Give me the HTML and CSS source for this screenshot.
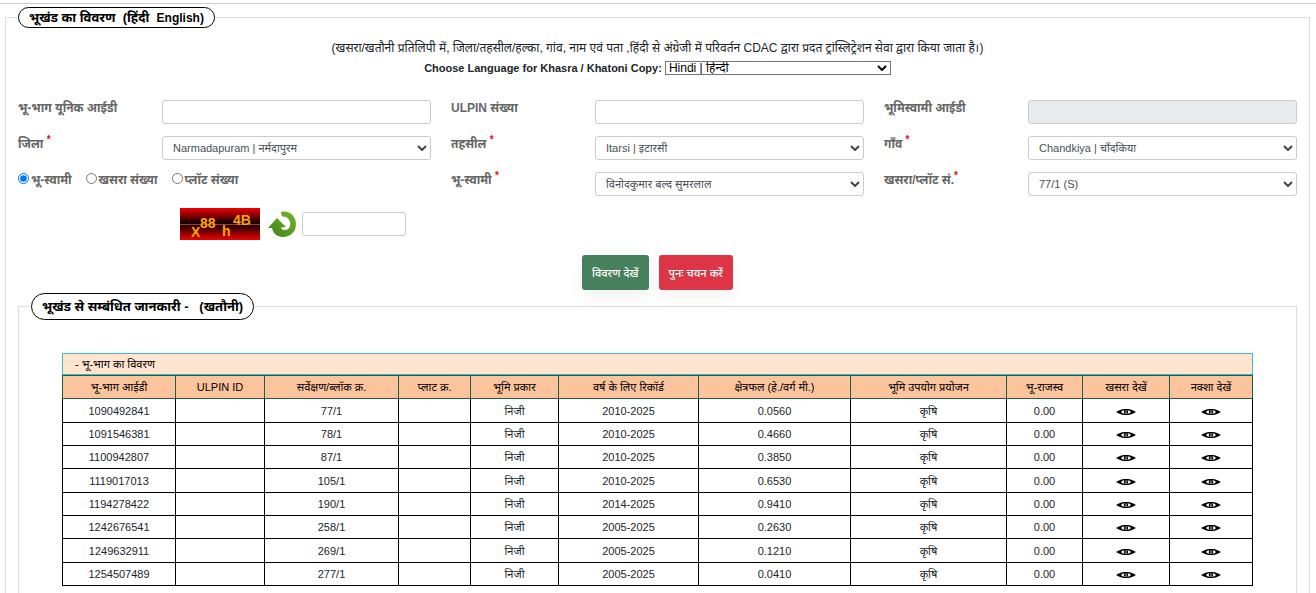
FILE: index.html
```html
<!DOCTYPE html>
<html lang="hi">
<head>
<meta charset="utf-8">
<title>भूखंड का विवरण</title>
<link rel="stylesheet" href="styles.css">
</head>
<body>
<svg class="defs" aria-hidden="true">
  <symbol id="eye" viewBox="0 0 20 8" preserveAspectRatio="none">
    <path d="M0 4C4 .5 7 0 10 0S16 .5 20 4C16 7.500 13 8 10 8S4 7.500 0 4Z" fill="#000"/>
    <path d="M5 4Q6 2 8.500 1.700Q6.800 4 8.500 6.300Q6 6 5 4ZM15 4Q14 2 11.500 1.700Q13.200 4 11.500 6.300Q14 6 15 4ZM8.500 5.200Q10 6.600 11.500 5.200L10 4.500Z" fill="#fff"/>
    <path d="M9 2.600L10 3.300L11.200 2.400" stroke="#fff" stroke-width=".7" fill="none"/>
  </symbol>
</svg>
<main class="page">
  <form class="panel">
    <fieldset class="group">
      <legend class="pill pill-main">भूखंड का विवरण &nbsp;(हिंदी &nbsp;<span class="latin">English)</span></legend>

      <div class="intro">
        <p class="note">(खसरा/खतौनी प्रतिलिपी में, जिला/तहसील/हल्का, गांव, नाम एवं पता ,हिंदी से अंग्रेजी में परिवर्तन CDAC द्वारा प्रदत ट्रांस्लिट्रेशन सेवा द्वारा किया जाता है।)</p>
        <div class="language">
          <label for="language">Choose Language for Khasra / Khatoni Copy:</label>
          <span class="select-box select-plain">
            <select id="language"><option>Hindi | हिन्दी</option></select>
            <svg class="chevron" viewBox="0 0 10 6"><path d="M1 1L5 5L9 1"/></svg>
          </span>
        </div>
      </div>

      <div class="fields">
        <div class="field"><label for="uid">भू-भाग यूनिक आईडी</label><input id="uid" type="text"></div>
        <div class="field"><label for="ulpin">ULPIN संख्या</label><input id="ulpin" type="text"></div>
        <div class="field"><label for="owner-id">भूमिस्वामी आईडी</label><input id="owner-id" type="text" disabled></div>

        <div class="field"><label for="district">जिला <sup>*</sup></label><span class="select-box"><select id="district"><option>Narmadapuram | नर्मदापुरम</option></select><svg class="chevron" viewBox="0 0 10 6"><path d="M1 1L5 5L9 1"/></svg></span></div>
        <div class="field"><label for="tehsil">तहसील <sup>*</sup></label><span class="select-box"><select id="tehsil"><option>Itarsi | इटारसी</option></select><svg class="chevron" viewBox="0 0 10 6"><path d="M1 1L5 5L9 1"/></svg></span></div>
        <div class="field"><label for="village">गाँव <sup>*</sup></label><span class="select-box"><select id="village"><option>Chandkiya | चाँदकिया</option></select><svg class="chevron" viewBox="0 0 10 6"><path d="M1 1L5 5L9 1"/></svg></span></div>

        <div class="choices">
          <label><input type="radio" name="by" checked>भू-स्वामी</label>
          <label><input type="radio" name="by">खसरा संख्या</label>
          <label><input type="radio" name="by">प्लॉट संख्या</label>
        </div>
        <div class="field"><label for="owner">भू-स्वामी <sup>*</sup></label><span class="select-box"><select id="owner"><option>विनोदकुमार बल्द सुमरलाल</option></select><svg class="chevron" viewBox="0 0 10 6"><path d="M1 1L5 5L9 1"/></svg></span></div>
        <div class="field"><label for="khasra">खसरा/प्लॉट सं.<sup>*</sup></label><span class="select-box"><select id="khasra"><option>77/1 (S)</option></select><svg class="chevron" viewBox="0 0 10 6"><path d="M1 1L5 5L9 1"/></svg></span></div>
      </div>

      <div class="captcha">
        <svg class="captcha-image" viewBox="0 0 80 32" role="img" aria-label="captcha">
          <defs><linearGradient id="glow" x1="0" y1="0" x2="0" y2="1"><stop offset="0" stop-color="#f00000"/><stop offset=".5" stop-color="#080000"/><stop offset="1" stop-color="#f00000"/></linearGradient></defs>
          <rect width="80" height="32" fill="url(#glow)"/>
          <path d="M0 16.500H80" stroke="#a33" stroke-width="1"/>
          <g class="captcha-text"><text x="11" y="29">X</text><text x="20" y="20">88</text><text x="42" y="28">h</text><text x="53" y="17">4B</text></g>
        </svg>
        <button class="refresh" type="button" aria-label="Refresh">
          <svg viewBox="0 0 28 26">
            <defs><linearGradient id="leaf" x1="0" y1="1" x2="1" y2="0"><stop offset="0" stop-color="#3d801b"/><stop offset="1" stop-color="#77b52b"/></linearGradient></defs>
            <path d="M13 1C21-1 28 5 28 13C28 21 22 26 15 26C9 26 5 22 4 17L0 17L9 7L18 16L13 16.500C13.500 18.500 15 19 17 19C21 19 23 15 22 11C21 7 18 5 14 5.500Z" fill="url(#leaf)"/>
          </svg>
        </button>
        <input type="text" aria-label="Captcha">
      </div>

      <div class="actions">
        <button class="button button-view" type="button">विवरण देखें</button>
        <button class="button button-reset" type="button">पुनः चयन करें</button>
      </div>

      <fieldset class="group details">
        <legend class="pill pill-details">भूखंड से सम्बंधित जानकारी - &nbsp;&nbsp;(खतौनी)</legend>
        <div class="results">
          <div class="results-title">- भू-भाग का विवरण</div>
          <table>
            <colgroup><col class="w-id"><col class="w-ulpin"><col class="w-survey"><col class="w-plot"><col class="w-type"><col class="w-year"><col class="w-area"><col class="w-use"><col class="w-revenue"><col class="w-khasra"><col class="w-map"></colgroup>
            <thead><tr><th>भू-भाग आईडी</th><th>ULPIN ID</th><th>सर्वेक्षण/ब्लॉक क्र.</th><th>प्लाट क्र.</th><th>भूमि प्रकार</th><th>वर्ष के लिए रिकॉर्ड</th><th>क्षेत्रफल (हे./वर्ग मी.)</th><th>भूमि उपयोग प्रयोजन</th><th>भू-राजस्व</th><th>खसरा देखें</th><th>नक्शा देखें</th></tr></thead>
            <tbody>
              <tr><td>1090492841</td><td></td><td>77/1</td><td></td><td>निजी</td><td>2010-2025</td><td>0.0560</td><td>कृषि</td><td>0.00</td><td><svg class="eye"><use href="#eye"/></svg></td><td><svg class="eye"><use href="#eye"/></svg></td></tr>
              <tr><td>1091546381</td><td></td><td>78/1</td><td></td><td>निजी</td><td>2010-2025</td><td>0.4660</td><td>कृषि</td><td>0.00</td><td><svg class="eye"><use href="#eye"/></svg></td><td><svg class="eye"><use href="#eye"/></svg></td></tr>
              <tr><td>1100942807</td><td></td><td>87/1</td><td></td><td>निजी</td><td>2010-2025</td><td>0.3850</td><td>कृषि</td><td>0.00</td><td><svg class="eye"><use href="#eye"/></svg></td><td><svg class="eye"><use href="#eye"/></svg></td></tr>
              <tr><td>1119017013</td><td></td><td>105/1</td><td></td><td>निजी</td><td>2010-2025</td><td>0.6530</td><td>कृषि</td><td>0.00</td><td><svg class="eye"><use href="#eye"/></svg></td><td><svg class="eye"><use href="#eye"/></svg></td></tr>
              <tr><td>1194278422</td><td></td><td>190/1</td><td></td><td>निजी</td><td>2014-2025</td><td>0.9410</td><td>कृषि</td><td>0.00</td><td><svg class="eye"><use href="#eye"/></svg></td><td><svg class="eye"><use href="#eye"/></svg></td></tr>
              <tr><td>1242676541</td><td></td><td>258/1</td><td></td><td>निजी</td><td>2005-2025</td><td>0.2630</td><td>कृषि</td><td>0.00</td><td><svg class="eye"><use href="#eye"/></svg></td><td><svg class="eye"><use href="#eye"/></svg></td></tr>
              <tr><td>1249632911</td><td></td><td>269/1</td><td></td><td>निजी</td><td>2005-2025</td><td>0.1210</td><td>कृषि</td><td>0.00</td><td><svg class="eye"><use href="#eye"/></svg></td><td><svg class="eye"><use href="#eye"/></svg></td></tr>
              <tr><td>1254507489</td><td></td><td>277/1</td><td></td><td>निजी</td><td>2005-2025</td><td>0.0410</td><td>कृषि</td><td>0.00</td><td><svg class="eye"><use href="#eye"/></svg></td><td><svg class="eye"><use href="#eye"/></svg></td></tr>
            </tbody>
          </table>
        </div>
      </fieldset>
    </fieldset>
  </form>
</main>
</body>
</html>
```
FILE: styles.css
```css
* { box-sizing: border-box; }

body {
  margin: 0;
  padding-top: 3px;
  background: #fff;
  color: #212529;
  font: 12px/20px "Liberation Sans", "Noto Sans Devanagari", "Noto Sans", sans-serif;
  overflow: hidden;
}

input, select, button { font: inherit; color: inherit; }

.defs { display: none; }

.page {
  border-top: 1px solid #ccc;
  padding: 3px 6px 0 5px;
}

.group {
  min-width: 0;
  margin: 0;
  padding: 0 12px 32px;
  border: 1px solid #ddd;
}

.pill {
  padding: 0 10px;
  border: 1px solid #000;
  border-radius: 14px;
  color: #000;
  font-size: 13px;
  font-weight: bold;
  white-space: nowrap;
}

.pill-main { line-height: 19px; }
.pill-details { line-height: 25px; }

.latin {
  font-size: 12px;
  line-height: 16px;
}

.intro {
  display: flex;
  flex-direction: column;
  align-items: center;
  padding-top: 10px;
}

.note { margin: 0; }

.language {
  display: flex;
  align-items: center;
  gap: 3px;
  font-size: 11px;
  font-weight: bold;
}

.select-box {
  display: block;
  position: relative;
}

select {
  appearance: none;
  display: block;
  width: 100%;
  height: 24px;
  padding: 0 24px 0 10px;
  border: 1px solid #ccc;
  border-radius: 3px;
  background: #fff;
  color: #495057;
  font-size: 11px;
  font-weight: normal;
}

.select-plain { width: 226px; }

.select-plain select {
  height: 14px;
  padding-left: 3px;
  border-color: #767676;
  border-radius: 0;
  color: #000;
  font-size: 12px;
  line-height: 12px;
}

.chevron {
  position: absolute;
  right: 4px;
  top: 50%;
  width: 10px;
  height: 6px;
  margin-top: -3px;
  fill: none;
  stroke: #444;
  stroke-width: 2;
  pointer-events: none;
}

.select-plain .chevron { stroke: #000; }

.fields {
  display: grid;
  grid-template-columns: repeat(3, 1fr);
  gap: 12px 20px;
  padding-top: 22px;
  color: #666;
  font-weight: bold;
}

.field {
  display: grid;
  grid-template-columns: 144px 1fr;
  height: 24px;
}

.field label, .choices label { line-height: 16px; white-space: nowrap; }

sup {
  color: #f00;
  font-size: 10px;
  line-height: 0;
}

input[type="text"] {
  width: 100%;
  height: 24px;
  border: 1px solid #ccc;
  border-radius: 3px;
  background: #fff;
}

input[type="text"]:disabled { background: #e9ecef; }

.choices {
  display: flex;
  gap: 14px;
}

.choices label {
  display: flex;
  align-items: flex-start;
  gap: 2px;
}

.choices input {
  width: 11px;
  height: 11px;
  margin: 1px 0 0;
}

.captcha {
  display: flex;
  align-items: center;
  padding: 12px 0 0 162px;
}

.captcha-image { width: 80px; height: 32px; }

.captcha-text {
  fill: #ffa500;
  font: bold 14px "Liberation Sans", sans-serif;
}

.refresh {
  width: 28px;
  height: 26px;
  margin: 0 6px 0 8px;
  padding: 0;
  border: 0;
  background: none;
}

.refresh svg { display: block; }

.captcha input { width: 104px; }

.actions {
  display: flex;
  justify-content: center;
  gap: 10px;
  padding: 15px 0 3px;
}

.button {
  height: 35px;
  padding: 0 10px;
  border: 0;
  border-radius: 3px;
  color: #fff;
  font-size: 11px;
  font-weight: 500;
  box-shadow: 0 8px 16px rgba(0, 0, 0, .05);
}

.button-view { background: #47805d; }
.button-reset { background: #dc3545; }

.details { padding: 0 43px 32px; }
.details .pill { margin-left: -31px; }

.results {
  padding-top: 33px;
  font-size: 11px;
}

.results-title {
  padding: 0 12px;
  border: 1px solid #40b6d7;
  background: #ffe4d0;
  color: #000;
}

table {
  width: 100%;
  table-layout: fixed;
  border-collapse: collapse;
  text-align: center;
}

th, td {
  height: 23px;
  padding: 0;
  border: 1px solid #000;
  line-height: 16px;
  white-space: nowrap;
}

th {
  border-color: #1e6042;
  background: #fbc49c;
  color: #000;
  font-weight: normal;
}

tbody tr:nth-child(3n + 1) td { height: 24px; }

.w-id { width: 113px; }
.w-ulpin { width: 89px; }
.w-survey { width: 134px; }
.w-plot { width: 72px; }
.w-type { width: 88px; }
.w-year { width: 140px; }
.w-area { width: 152px; }
.w-use { width: 156px; }
.w-revenue { width: 76px; }
.w-khasra { width: 87px; }
.w-map { width: 83px; }

.eye {
  display: block;
  width: 20px;
  height: 6px;
  margin: 2px auto 0;
}
```
